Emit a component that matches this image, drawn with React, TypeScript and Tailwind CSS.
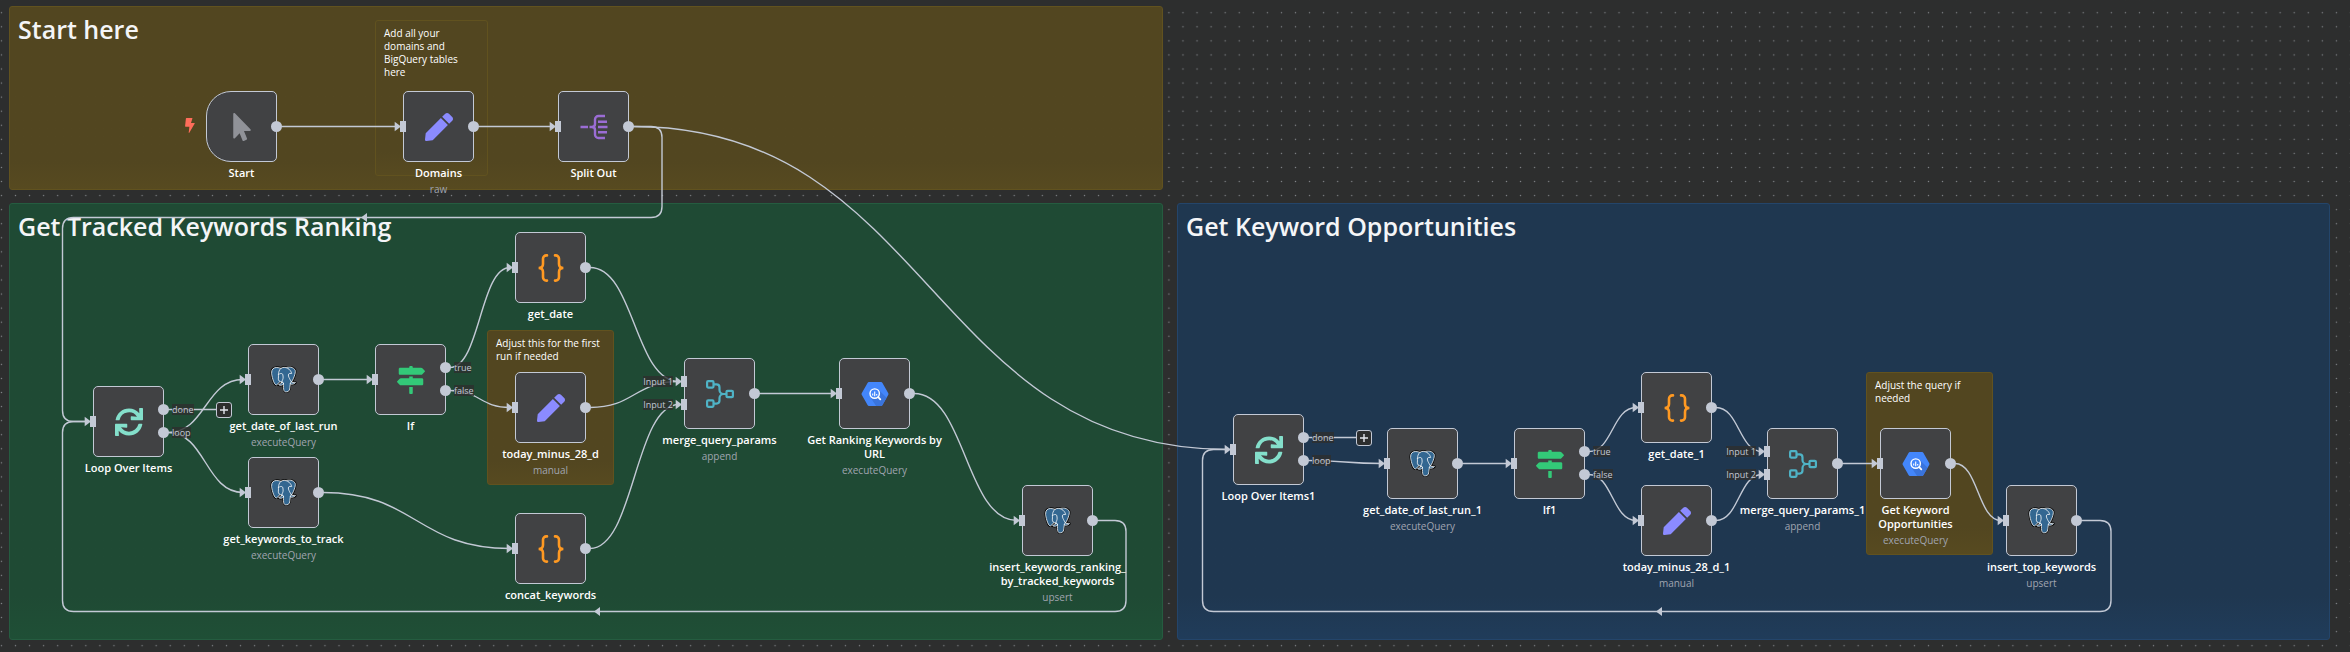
import { FaMapSigns, FaMousePointer, FaPen, FaSync } from "react-icons/fa";
import type { ReactNode } from "react";

type IconName = "pointer" | "pen" | "split" | "loop" | "postgres" | "sign" | "code" | "merge" | "bigquery";

interface FlowNode {
  x: number;
  y: number;
  icon: IconName;
  name: string;
  detail?: string;
  trigger?: boolean;
  inputs?: string[];
  outputs?: string[];
}

interface Note {
  x: number;
  y: number;
  w: number;
  h: number;
  tone: "yellow" | "green" | "blue";
  title?: string;
  text?: string;
}

const NODE = 71;

const notes: Note[] = [
  { x: 9, y: 6, w: 1154, h: 184, tone: "yellow", title: "Start here" },
  { x: 9, y: 203, w: 1154, h: 437, tone: "green", title: "Get Tracked Keywords Ranking" },
  { x: 1177, y: 203, w: 1153, h: 437, tone: "blue", title: "Get Keyword Opportunities" },
  { x: 375, y: 20, w: 113, h: 156, tone: "yellow", text: "Add all your domains and BigQuery tables here" },
  { x: 487, y: 330, w: 127, h: 155, tone: "yellow", text: "Adjust this for the first run if needed" },
  { x: 1866, y: 372, w: 127, h: 183, tone: "yellow", text: "Adjust the query if needed" },
];

const nodes: Record<string, FlowNode> = {
  start: { x: 206, y: 91, icon: "pointer", name: "Start", trigger: true, inputs: [] },
  domains: { x: 403, y: 91, icon: "pen", name: "Domains", detail: "raw" },
  split: { x: 558, y: 91, icon: "split", name: "Split Out" },
  loop: { x: 93, y: 386, icon: "loop", name: "Loop Over Items", outputs: ["done", "loop"] },
  lastRun: { x: 248, y: 344, icon: "postgres", name: "get_date_of_last_run", detail: "executeQuery" },
  toTrack: { x: 248, y: 457, icon: "postgres", name: "get_keywords_to_track", detail: "executeQuery" },
  cond: { x: 375, y: 344, icon: "sign", name: "If", outputs: ["true", "false"] },
  date: { x: 515, y: 232, icon: "code", name: "get_date" },
  today: { x: 515, y: 372, icon: "pen", name: "today_minus_28_d", detail: "manual" },
  concat: { x: 515, y: 513, icon: "code", name: "concat_keywords" },
  merge: { x: 684, y: 358, icon: "merge", name: "merge_query_params", detail: "append", inputs: ["Input 1", "Input 2"] },
  ranking: { x: 839, y: 358, icon: "bigquery", name: "Get Ranking Keywords by\nURL", detail: "executeQuery" },
  insert: { x: 1022, y: 485, icon: "postgres", name: "insert_keywords_ranking_\nby_tracked_keywords", detail: "upsert" },
  loop1: { x: 1233, y: 414, icon: "loop", name: "Loop Over Items1", outputs: ["done", "loop"] },
  lastRun1: { x: 1387, y: 428, icon: "postgres", name: "get_date_of_last_run_1", detail: "executeQuery" },
  cond1: { x: 1514, y: 428, icon: "sign", name: "If1", outputs: ["true", "false"] },
  date1: { x: 1641, y: 372, icon: "code", name: "get_date_1" },
  today1: { x: 1641, y: 485, icon: "pen", name: "today_minus_28_d_1", detail: "manual" },
  merge1: { x: 1767, y: 428, icon: "merge", name: "merge_query_params_1", detail: "append", inputs: ["Input 1", "Input 2"] },
  opportunities: { x: 1880, y: 428, icon: "bigquery", name: "Get Keyword\nOpportunities", detail: "executeQuery" },
  insertTop: { x: 2006, y: 485, icon: "postgres", name: "insert_top_keywords", detail: "upsert" },
};

/* from, output index, to, input index */
const links: [string, number, string, number][] = [
  ["start", 0, "domains", 0],
  ["domains", 0, "split", 0],
  ["split", 0, "loop1", 0],
  ["loop", 1, "lastRun", 0],
  ["loop", 1, "toTrack", 0],
  ["lastRun", 0, "cond", 0],
  ["cond", 0, "date", 0],
  ["cond", 1, "today", 0],
  ["toTrack", 0, "concat", 0],
  ["date", 0, "merge", 0],
  ["today", 0, "merge", 0],
  ["concat", 0, "merge", 1],
  ["merge", 0, "ranking", 0],
  ["ranking", 0, "insert", 0],
  ["loop1", 1, "lastRun1", 0],
  ["lastRun1", 0, "cond1", 0],
  ["cond1", 0, "date1", 0],
  ["cond1", 1, "today1", 0],
  ["date1", 0, "merge1", 0],
  ["today1", 0, "merge1", 1],
  ["merge1", 0, "opportunities", 0],
  ["opportunities", 0, "insertTop", 0],
];

/* from, to, right lane x, horizontal lane y, left lane x, arrow tip x */
const returns: [string, string, number, number, number, number][] = [
  ["split", "loop", 662, 217.5, 62.5, 361],
  ["insert", "loop", 1126, 611.5, 62.5, 594],
  ["insertTop", "loop1", 2111, 611.5, 1202.5, 1656],
];

const portY = (n: FlowNode, ports: string[] | undefined, i: number) =>
  n.y + (ports && ports.length === 2 ? (i === 0 ? 23.5 : 46.5) : 35.5);

function linkPath([a, i, b, j]: [string, number, string, number]) {
  const s = nodes[a];
  const t = nodes[b];
  const x1 = s.x + NODE + 4;
  const y1 = portY(s, s.outputs, i);
  const x2 = t.x - 5;
  const y2 = portY(t, t.inputs, j);
  const mid = (x1 + x2) / 2;
  return `M${x1} ${y1}C${mid} ${y1} ${mid} ${y2} ${x2} ${y2}`;
}

function returnPath([a, b, right, lane, left]: [string, string, number, number, number, number]) {
  const y1 = nodes[a].y + 35.5;
  const y2 = nodes[b].y + 35.5;
  const v = lane > y2 ? -1 : 1;
  const r = 11;
  return [
    `M${nodes[a].x + NODE + 4} ${y1}H${right - r}Q${right} ${y1} ${right} ${y1 + r}`,
    `V${lane - r}Q${right} ${lane} ${right - r} ${lane}`,
    `H${left + r}Q${left} ${lane} ${left} ${lane + v * r}`,
    `V${y2 - v * r}Q${left} ${y2} ${left + r} ${y2}H${nodes[b].x - 5}`,
  ].join("");
}

function Edges() {
  return (
    <svg className="pointer-events-none absolute inset-0 h-full w-full" fill="none" stroke="#c3c9d5" strokeWidth="1.4" aria-hidden="true">
      {links.map((l) => (
        <path key={l.join()} d={linkPath(l)} />
      ))}
      {returns.map((r) => (
        <g key={r.join()}>
          <path d={returnPath(r)} />
          <path d={`M${r[5]} ${r[3]}l6 -4.5v9z`} fill="#c3c9d5" stroke="none" />
        </g>
      ))}
      {Object.entries(nodes).flatMap(([id, n]) =>
        (n.inputs ?? [""]).map((_, i) => (
          <path key={id + i} d={`M${n.x - 2} ${portY(n, n.inputs, i)}l-6.3 -4.7v9.4z`} fill="#c3c9d5" stroke="none" />
        )),
      )}
      {[nodes.loop, nodes.loop1].map((n) => (
        <path key={n.name} d={`M${n.x + NODE + 4} ${n.y + 23.5}H${n.x + 124}`} />
      ))}
    </svg>
  );
}

function Elephant() {
  return (
    <svg viewBox="0 0 432 446" className="h-[27px] w-[27px]" aria-hidden="true">
      <path
        fill="#000"
        stroke="#000"
        strokeWidth="37"
        strokeLinejoin="round"
        d="M323.205 324.227c2.833-23.601 1.984-27.062 19.563-23.239l4.463.392c13.517.615 31.199-2.174 41.587-7 22.362-10.376 35.622-27.7 13.572-23.148-50.297 10.376-53.755-6.655-53.755-6.655 53.111-78.803 75.313-178.836 56.149-203.322C352.514-5.534 262.036 26.049 260.522 26.869l-.482.089c-9.938-2.062-21.06-3.294-33.554-3.496-22.761-.374-40.032 5.967-53.133 15.904 0 0-161.408-66.498-153.899 83.628 1.597 31.936 45.777 241.655 98.47 178.31 19.259-23.163 37.871-42.748 37.871-42.748 9.242 6.14 20.307 9.272 31.912 8.147l.897-.765c-.281 2.876-.157 5.689.359 9.019-13.572 15.167-9.584 17.83-36.723 23.416-27.457 5.659-11.326 15.734-.797 18.367 12.768 3.193 42.305 7.716 62.268-20.224l-.795 3.188c5.325 4.26 4.965 30.619 5.72 49.452.756 18.834 2.017 36.409 5.856 46.771 3.839 10.36 8.369 37.05 44.036 29.406 29.809-6.388 52.6-15.582 54.677-101.107"
      />
      <path
        fill="#336791"
        d="M402.395 271.23c-50.302 10.376-53.76-6.655-53.76-6.655 53.111-78.808 75.313-178.843 56.153-203.326-52.27-66.785-142.752-35.2-144.262-34.38l-.486.087c-9.938-2.063-21.06-3.292-33.56-3.496-22.761-.373-40.026 5.967-53.127 15.902 0 0-161.411-66.495-153.904 83.63 1.597 31.938 45.776 241.657 98.471 178.312 19.26-23.163 37.869-42.748 37.869-42.748 9.243 6.14 20.308 9.272 31.908 8.147l.901-.765c-.28 2.876-.152 5.689.361 9.019-13.575 15.167-9.586 17.83-36.723 23.416-27.459 5.659-11.328 15.734-.796 18.367 12.768 3.193 42.307 7.716 62.266-20.224l-.796 3.188c5.319 4.26 9.054 27.711 8.428 48.969-.626 21.259-1.044 35.854 3.147 47.254 4.191 11.4 8.368 37.05 44.042 29.406 29.809-6.388 45.256-22.942 47.405-50.555 1.525-19.631 4.976-16.729 5.194-34.28l2.768-8.309c3.192-26.611.507-35.196 18.872-31.203l4.463.392c13.517.615 31.208-2.174 41.591-7 22.358-10.376 35.618-27.7 13.573-23.148z"
      />
      <g fill="none" stroke="#fff" strokeWidth="13" strokeLinecap="round" strokeLinejoin="round">
        <path d="M215.866 286.484c-1.385 49.516.348 99.377 5.193 111.495 4.848 12.118 15.223 35.688 50.9 28.045 29.806-6.39 40.651-18.756 45.357-46.051 3.466-20.082 10.148-75.854 11.005-87.281" />
        <path d="M173.104 38.256S11.583-27.76 19.092 122.365c1.597 31.938 45.779 241.664 98.473 178.316 19.256-23.166 36.671-41.335 36.671-41.335" />
        <path d="M260.349 26.207c-5.591 1.753 89.848-34.889 144.087 34.417 19.159 24.484-3.043 124.519-56.153 203.329" />
        <path d="M348.282 263.953s3.461 17.036 53.764 6.653c22.04-4.552 8.776 12.774-13.577 23.155-18.345 8.514-59.474 10.696-60.146-1.069-1.729-30.355 21.647-21.133 19.96-28.739-1.525-6.85-11.979-13.573-18.894-30.338-6.037-14.633-82.796-126.849 21.287-110.183 3.813-.789-27.146-99.002-124.553-100.599-97.385-1.597-94.19 119.762-94.19 119.762" />
        <path d="M188.604 274.334c-13.577 15.166-9.584 17.829-36.723 23.417-27.459 5.66-11.326 15.733-.797 18.365 12.768 3.195 42.307 7.718 62.266-20.229 6.078-8.509-.036-22.086-8.385-25.547-4.034-1.671-9.428-3.765-16.361 3.994z" />
        <path d="M187.715 274.069c-1.368-8.917 2.93-19.528 7.536-31.942 6.922-18.626 22.893-37.255 10.117-96.339-9.523-44.029-73.396-9.163-73.436-3.193-.039 5.968 2.889 30.26-1.067 58.548-5.162 36.913 23.488 68.132 56.479 64.938" />
      </g>
    </svg>
  );
}

function BigQuery() {
  return (
    <svg viewBox="0 0 28 28" className="h-7 w-7" aria-hidden="true">
      <path d="M7.9 2h12.2q.8 0 1.2.7l6 10.6q.4.7 0 1.4l-6 10.6q-.4.7-1.2.7H7.9q-.8 0-1.2-.7l-6-10.6q-.4-.7 0-1.4l6-10.6q.4-.7 1.2-.7z" fill="#4386fa" />
      <path d="M17.6 9.8l8 8-4.3 7.5q-.4.7-1.2.7h-5l-5-7.6z" fill="#3a74dc" />
      <circle cx="13.7" cy="13.6" r="4.7" fill="#4386fa" stroke="#fff" strokeWidth="1.4" />
      <path d="M17.2 17.2l2.1 2.1" stroke="#fff" strokeWidth="1.8" strokeLinecap="round" />
      <path d="M11.7 13.5v2M13.7 11.5v4.7M15.7 14v1.5" stroke="#fff" strokeWidth="1.1" />
    </svg>
  );
}

const icons: Record<IconName, ReactNode> = {
  pointer: <FaMousePointer size={28} className="text-[#909298]" />,
  pen: <FaPen size={28} className="text-[#8b8bff]" />,
  loop: <FaSync size={28} className="text-[#84dfcb]" />,
  sign: <FaMapSigns size={28} className="text-[#33c978]" />,
  postgres: <Elephant />,
  bigquery: <BigQuery />,
  code: (
    <svg viewBox="0 0 28 28" className="h-7 w-7" fill="none" stroke="#ff9922" strokeWidth="2.6" strokeLinecap="round" aria-hidden="true">
      <path d="M10 1.4h-.6A3.4 3.4 0 0 0 6 4.8V10c0 2.4-1.5 4-4.4 4C4.5 14 6 15.6 6 18v5.2a3.4 3.4 0 0 0 3.4 3.4h.6" />
      <path d="M18 1.4h.6A3.4 3.4 0 0 1 22 4.8V10c0 2.4 1.5 4 4.4 4-2.9 0-4.4 1.6-4.4 4v5.2a3.4 3.4 0 0 1-3.4 3.4H18" />
    </svg>
  ),
  merge: (
    <svg viewBox="0 0 28 28" className="h-7 w-7" fill="none" stroke="#4fb3c6" strokeWidth="2.2" aria-hidden="true">
      <rect x="1.1" y="1.2" width="6.4" height="6.4" rx="1" />
      <rect x="1.1" y="20.4" width="6.4" height="6.4" rx="1" />
      <rect x="20.5" y="10.8" width="6.4" height="6.4" rx="1" />
      <path d="M7.6 4.4h2.9a3 3 0 0 1 3 3V10a4 4 0 0 0 4 4h2.9M7.6 23.6h2.9a3 3 0 0 0 3-3V18a4 4 0 0 1 4-4" />
    </svg>
  ),
  split: (
    <svg viewBox="0 0 28 28" className="h-7 w-7" fill="none" stroke="#9b6dd5" strokeWidth="2.4" aria-hidden="true">
      <path d="M.5 14H8M9.5 14h3M18 8.7h9M18 14h9.5M18 19.3h9" />
      <path d="M25 3h-6.5A3.5 3.5 0 0 0 15 6.5V11c0 1.8-1 3-3 3 2 0 3 1.2 3 3v4.5a3.5 3.5 0 0 0 3.5 3.5H25" />
    </svg>
  ),
};

const tones = {
  yellow: "border-[#61521f] bg-linear-to-b from-[#524620] from-85% to-[#574a20]",
  green: "border-[#255c40] bg-linear-to-b from-[#1f4a34] from-90% to-[#1f4f36]",
  blue: "border-[#24456a] bg-linear-to-b from-[#1f3750] from-90% to-[#203c5a]",
};

function StickyNote({ note }: { note: Note }) {
  return (
    <section
      className={`absolute rounded-[3px] border px-2 ${tones[note.tone]}`}
      style={{ left: note.x, top: note.y, width: note.w, height: note.h }}
    >
      {note.title && <h2 className="pt-1 text-[25px] leading-9 font-semibold text-[#f4f5f7]">{note.title}</h2>}
      {note.text && <p className="pt-1.5 text-[10px] leading-[13px] font-medium text-white">{note.text}</p>}
    </section>
  );
}

const portLabel = "absolute top-0 bg-[#2d2e2e]/80 text-[9px] leading-[11px] whitespace-nowrap text-[#c3c9d5]";

function NodeCard({ node }: { node: FlowNode }) {
  const inputs = node.inputs ?? [""];
  const outputs = node.outputs ?? [""];
  const place = (count: number, i: number) => (count === 1 ? "top-[30px]" : i === 0 ? "top-[18px]" : "top-[41px]");
  return (
    <article className="absolute flex w-[71px] flex-col items-center" style={{ left: node.x, top: node.y }}>
      {node.trigger && (
        <svg viewBox="0 0 10 15" className="absolute top-[27px] -left-[21px] h-[15px] w-[10px]" fill="#ff6d5a" aria-hidden="true">
          <path d="M1.4 0h5.7q.5 0 .3.5L6 4.9h3.4q.6 0 .3.6L4.3 14.7q-.6.6-.6-.2l.7-5.8H.6Q0 8.7.1 8.100L.9.5q.1-.5.5-.5z" />
        </svg>
      )}
      <div
        className={`relative flex h-[71px] w-full items-center justify-center border border-[#c3c9d5] bg-[#414244] ${
          node.trigger ? "rounded-l-[25px] rounded-r-[5px]" : "rounded-[5px]"
        }`}
      >
        {icons[node.icon]}
      </div>
      {inputs.map((label, i) => (
        <span key={"in" + i} className={`absolute -left-[3px] h-[11px] w-[6px] bg-[#c3c9d5] ${place(inputs.length, i)}`}>
          {label && <span className={`right-[14px] ${portLabel}`}>{label}</span>}
        </span>
      ))}
      {outputs.map((label, i) => (
        <span key={"out" + i} className={`absolute left-[65px] size-[11px] rounded-full bg-[#c3c9d5] ${place(outputs.length, i)}`}>
          {label && <span className={`left-[14px] ${portLabel}`}>{label}</span>}
        </span>
      ))}
      {node.icon === "loop" && (
        <button
          type="button"
          aria-label="Add node"
          className="absolute top-4 left-[123px] flex size-4 items-center justify-center rounded-[3px] border border-[#c3c9d5] bg-[#2d2e2e]"
        >
          <svg viewBox="0 0 8 8" className="size-2" stroke="#e4e7ee" strokeWidth="1.4" aria-hidden="true">
            <path d="M4 0v8M0 4h8" />
          </svg>
        </button>
      )}
      <h3 className="mt-1 text-center text-[11px] leading-[14px] font-semibold whitespace-pre text-white">{node.name}</h3>
      {node.detail && <p className="mt-0.5 text-[10px] leading-[14px] text-[#a0a5b0]">{node.detail}</p>}
    </article>
  );
}

export default function App() {
  return (
    <main className="relative min-h-screen w-full overflow-hidden bg-[#2d2e2e] font-['Open_Sans',sans-serif]">
      <svg className="absolute inset-0 h-full w-full" aria-hidden="true">
        <pattern id="grid" x="-5.6" y="5.7" width="14.066" height="14.066" patternUnits="userSpaceOnUse">
          <circle cx="7.033" cy="7.033" r=".7" fill="#84878c" />
        </pattern>
        <rect width="100%" height="100%" fill="url(#grid)" />
      </svg>
      {notes.map((n) => (
        <StickyNote key={n.title ?? n.text} note={n} />
      ))}
      <Edges />
      {Object.entries(nodes).map(([id, n]) => (
        <NodeCard key={id} node={n} />
      ))}
    </main>
  );
}
